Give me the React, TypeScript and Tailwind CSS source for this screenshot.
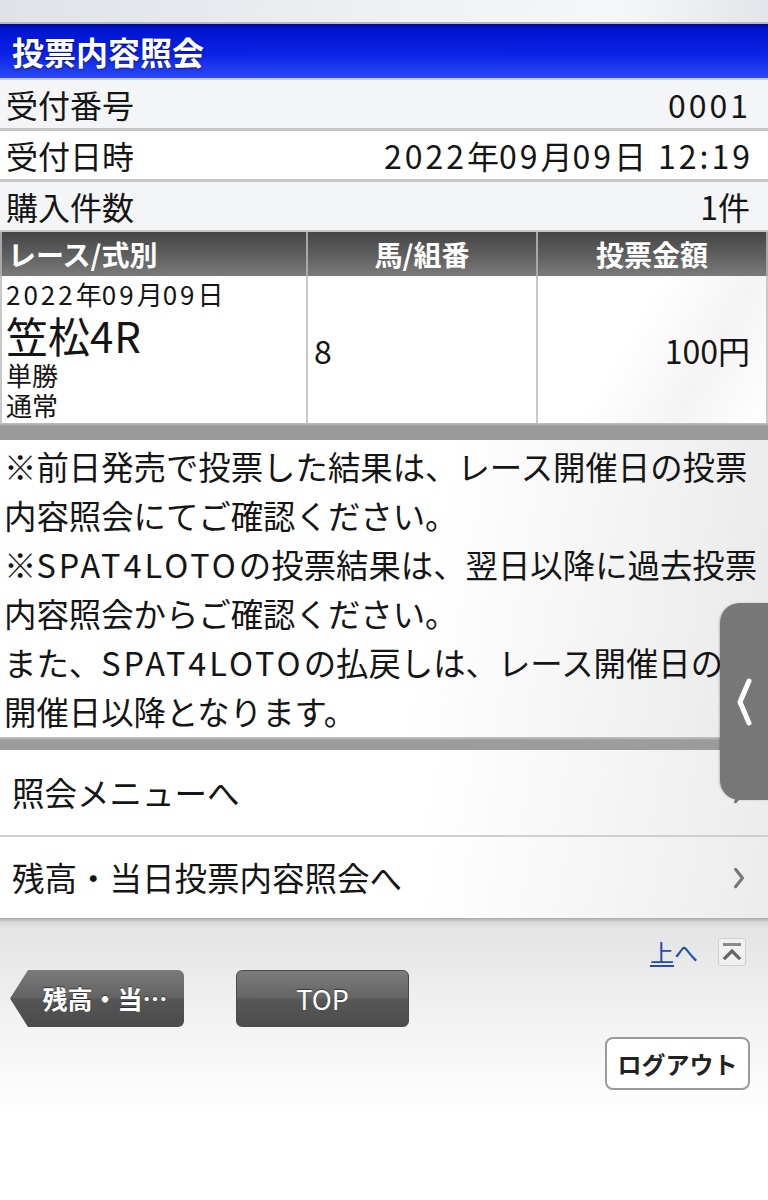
import React from "react";

function ChevronRight({ className }: { className?: string }) {
  return (
    <svg className={className} viewBox="0 0 16 28" fill="none">
      <path d="M4 4 L12 14 L4 24" stroke="currentColor" strokeWidth="3.5" strokeLinecap="round" strokeLinejoin="round" />
    </svg>
  );
}

function L({ children }: { children: React.ReactNode }) {
  return <span className="tracking-[3px]">{children}</span>;
}

export default function App() {
  return (
    <div className='relative w-[768px] min-h-[1200px] overflow-hidden bg-white text-[#151515] font-["Noto_Sans_CJK_JP","Noto_Sans",sans-serif]'>
      {/* top strip */}
      <div className="h-[22px] bg-[linear-gradient(100deg,#dfe2e8_0%,#eef0f3_50%,#f6f7f9_80%,#e3e5ea_100%)]" />
      <div className="h-[2px] bg-[#b5b9c2]" />
      {/* title bar */}
      <div className="h-[54px] flex items-center px-[12px] bg-[linear-gradient(180deg,#00098a_0%,#0014cf_8%,#0a22e6_55%,#2a4af6_100%)]">
        <span className="text-[32px] leading-none font-bold text-white [text-shadow:0_1px_2px_rgba(0,0,0,0.5)]">投票内容照会</span>
      </div>
      <div className="h-[2px] bg-[#c9ccd2]" />
      {/* info rows */}
      <div className="h-[48px] flex items-center justify-between pl-[6px] pr-[17px] bg-[#f3f5f6] text-[32px] leading-none">
        <span>受付番号</span>
        <span className="tracking-[3px]">0001</span>
      </div>
      <div className="h-[3px] bg-[#c6c6c6]" />
      <div className="h-[48px] flex items-center justify-between pl-[6px] pr-[15px] bg-white text-[32px] leading-none">
        <span>受付日時</span>
        <span>
          <L>2022</L>年<L>09</L>月<L>09</L>日<span className="inline-block w-[12px]" /><L>12:19</L>
        </span>
      </div>
      <div className="h-[3px] bg-[#c6c6c6]" />
      <div className="h-[48px] flex items-center justify-between pl-[6px] pr-[18px] bg-[#f3f5f6] text-[32px] leading-none">
        <span>購入件数</span>
        <span>1件</span>
      </div>
      <div className="h-[2px] bg-[#c6c6c6]" />
      {/* table */}
      <div className="grid grid-cols-[304px_228px_1fr] gap-x-[2px] bg-[#a8a8a8] px-[2px]">
        <div className="h-[44px] flex items-center pl-[6px] bg-[linear-gradient(180deg,#454545_0%,#5e5e5e_50%,#7a7a7a_100%)] text-white text-[28px] font-bold leading-none">レース/式別</div>
        <div className="h-[44px] flex items-center justify-center bg-[linear-gradient(180deg,#454545_0%,#5e5e5e_50%,#7a7a7a_100%)] text-white text-[28px] font-bold leading-none">馬/組番</div>
        <div className="h-[44px] flex items-center justify-center bg-[linear-gradient(180deg,#454545_0%,#5e5e5e_50%,#7a7a7a_100%)] text-white text-[28px] font-bold leading-none">投票金額</div>
      </div>
      <div className="grid grid-cols-[304px_228px_1fr] gap-x-[2px] bg-[#c8c8c8] px-[2px]">
        <div className="bg-white pl-[4px] pt-[2px] pb-[3px] flex flex-col">
          <span className="text-[26px] leading-[32px]">
            <L>2022</L>年<L>09</L>月<L>09</L>日
          </span>
          <span className="text-[42px] leading-[50px]">笠松<span className="tracking-[1px]">4R</span></span>
          <span className="text-[26px] leading-[30px]">単勝</span>
          <span className="text-[26px] leading-[30px]">通常</span>
        </div>
        <div className="bg-white flex items-center pl-[6px] text-[32px] leading-none">8</div>
        <div className="bg-[linear-gradient(120deg,#ffffff_40%,#f4f4f4_70%,#ffffff_100%)] flex items-center justify-end pr-[16px] text-[32px] leading-none">100円</div>
      </div>
      <div className="h-[17px] bg-[linear-gradient(180deg,#c0c0c0_0%,#9a9a9a_20%,#9a9a9a_100%)]" />
      {/* notes */}
      <div className="pl-[4px] pt-[1px] pb-[2px] text-[32.4px] leading-[49px] bg-[linear-gradient(100deg,#ffffff_0%,#ffffff_55%,#e9e9e9_100%)]">
        <p>※前日発売で投票した結果は、レース開催日の投票</p>
        <p>内容照会にてご確認ください。</p>
        <p>※<L>SPAT4LOTO</L>の投票結果は、翌日以降に過去投票</p>
        <p>内容照会からご確認ください。</p>
        <p>また、<L>SPAT4LOTO</L>の払戻しは、レース開催日の</p>
        <p>開催日以降となります。</p>
      </div>
      <div className="h-[13px] bg-[linear-gradient(180deg,#c4c4c4_0%,#9c9c9c_25%,#9c9c9c_100%)]" />
      {/* menu */}
      <div className="h-[85px] flex items-center justify-between pl-[12px] pr-[22px] text-[32.5px] leading-none bg-[linear-gradient(100deg,#ffffff_0%,#ffffff_55%,#ececec_100%)]">
        <span>照会メニューへ</span>
        <ChevronRight className="w-[14px] h-[26px] text-[#777]" />
      </div>
      <div className="h-[2px] bg-[#cfcfcf]" />
      <div className="h-[81px] flex items-center justify-between pl-[12px] pr-[22px] text-[32.5px] leading-none bg-[linear-gradient(100deg,#ffffff_0%,#ffffff_55%,#ececec_100%)]">
        <span>残高・当日投票内容照会へ</span>
        <ChevronRight className="w-[14px] h-[26px] text-[#777]" />
      </div>
      {/* footer */}
      <div className="min-h-[282px] bg-[linear-gradient(180deg,#a9a9a9_0px,#d8d8d8_4px,#e4e4e4_10px,#efefef_80px,#fafafa_160px,#ffffff_200px)] pb-[40px]">
        <div className="flex items-center justify-end pt-[20px] pr-[22px] gap-[20px]">
          <span className="text-[24px] leading-none text-[#1d4fb0]">
            <span className="underline decoration-[2px] underline-offset-[3px]">上</span>へ
          </span>
          <div className="w-[28px] h-[28px] rounded-[3px] border border-[#cfcfcf] bg-[#f1f1f1] flex flex-col items-center pt-[4px]">
            <div className="w-[18px] h-[3px] bg-[#8a8a8a]" />
            <svg className="w-[18px] h-[12px] mt-[2px]" viewBox="0 0 18 12" fill="none">
              <path d="M2 10 L9 3 L16 10" stroke="#666" strokeWidth="3.2" strokeLinecap="square" />
            </svg>
          </div>
        </div>
        <div className="flex items-center pl-[10px] mt-[4px] gap-[52px]">
          <div className="w-[174px] h-[57px] rounded-r-[6px] flex items-center justify-center pl-[16px] text-white text-[25px] font-bold leading-none bg-[linear-gradient(180deg,#7a7a7a_0%,#636363_48%,#555555_52%,#4a4a4a_100%)] [clip-path:polygon(18px_0,100%_0,100%_100%,18px_100%,0_50%)] [text-shadow:0_-1px_1px_rgba(0,0,0,0.5)]">
            残高・当…
          </div>
          <div className="w-[173px] h-[57px] rounded-[6px] border border-[#4a4a4a] flex items-center justify-center text-white text-[27px] leading-none bg-[linear-gradient(180deg,#7c7c7c_0%,#656565_48%,#575757_52%,#4c4c4c_100%)] [text-shadow:0_-1px_1px_rgba(0,0,0,0.5)]">
            TOP
          </div>
        </div>
        <div className="flex justify-end pr-[18px] mt-[10px]">
          <div className="w-[145px] h-[53px] rounded-[8px] border-2 border-[#9a9a9a] bg-white flex items-center justify-center text-[24px] font-bold leading-none text-[#222]">
            ログアウト
          </div>
        </div>
      </div>
      {/* side drawer handle */}
      <div className="absolute right-0 top-[603px] w-[48px] h-[197px] rounded-l-[20px] bg-[#777777] flex items-center justify-center shadow-[-1px_0_2px_rgba(0,0,0,0.2)]">
        <svg className="w-[20px] h-[50px]" viewBox="0 0 20 50" fill="none">
          <path d="M15 4 L6 25 L15 46" stroke="#ffffff" strokeWidth="5" strokeLinecap="round" strokeLinejoin="round" />
        </svg>
      </div>
    </div>
  );
}
